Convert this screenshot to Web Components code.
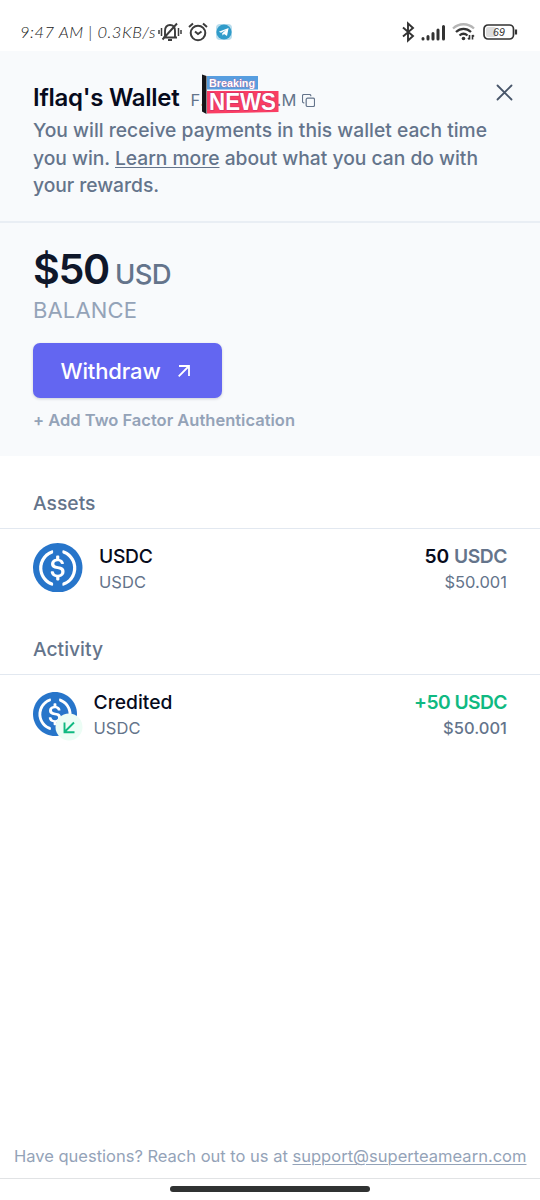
<!DOCTYPE html>
<html lang="en">
<head>
<meta charset="utf-8">
<title>Wallet</title>
<style>
html,body{margin:0;background:#fff}
body{font-family:Inter,"Liberation Sans",sans-serif;color:#64748b}
</style>
</head>
<body>
<wallet-app></wallet-app>
<script>
const define = (name, html, setup) => {
  const t = document.createElement('template');
  t.innerHTML = html;
  customElements.define(name, class extends HTMLElement {
    connectedCallback() {
      if (this.shadowRoot) return;
      this.attachShadow({mode: 'open'}).append(t.content.cloneNode(true));
      if (setup) setup(this);
    }
  });
};

/* A single line of text whose tracking is tuned so that it spans "w" pixels. */
define('text-run', `<style>:host{display:inline-block;white-space:pre}span{display:inline-block}:host([link]) span{text-decoration:underline;text-decoration-thickness:1.300px;text-underline-offset:2px}</style><span><slot></slot></span>`, el => {
  const w = +el.getAttribute('w');
  if (!w) return;
  const s = el.shadowRoot.querySelector('span');
  const n = el.textContent.length;
  s.style.letterSpacing = ((w - s.getBoundingClientRect().width) / n) + 'px';
});

define('status-bar', `<style>
:host{display:flex;height:51px;box-sizing:border-box;padding:13px 22px 0 20px;align-items:center;justify-content:space-between;color:#444}
.l,.r{display:flex;align-items:center}
.t{font:italic 300 16.500px/22px Lato,"Open Sans",sans-serif;color:#222}
svg{display:block;overflow:visible}
.cell{position:relative}
.cell text-run{position:absolute;left:10px;top:2px;font:italic 10.500px/12px "Liberation Sans",sans-serif;color:#333}
</style>
<div class="l"><text-run class="t" w="136">9:47 AM | 0.3KB/s</text-run>
<svg width="24" height="20" viewBox="0 0 24 20" style="margin-left:2px" fill="none" stroke="#3c3c3c" stroke-width="1.900"><path d="M5 15.500h14M7 15V9c0-4 2-6 5-6s5 2 5 6v6M10 18h4M4.500 17.500 19 1.500"/><path stroke-width="1.500" d="M1 8v4M3.500 6v8M20.500 6v8M23 8v4"/></svg>
<svg width="20" height="20" viewBox="0 0 20 20" style="margin-left:6px" fill="none" stroke="#3c3c3c" stroke-width="2"><circle cx="10" cy="11" r="7.300"/><path d="M7 9.500l3 2.500 3.500-2.500M1 5l4-3.500M19 5l-4-3.500"/></svg>
<svg width="16" height="16" viewBox="0 0 16 16" style="margin-left:8px"><rect width="16" height="16" rx="4" fill="#b9dded"/><circle cx="8" cy="8" r="7.600" fill="#309cca"/><path fill="#fff" d="M2.800 7.800 12.600 4 11 12 8 10 6.500 11.500 6.200 9.200 10 6 5 8.700z"/></svg></div>
<div class="r">
<svg width="13" height="20" viewBox="0 0 13 20" fill="none" stroke="#333" stroke-width="1.900"><path d="M1 5.500 11 14l-5 4.500V1.500L11 6 1 14.500"/></svg>
<svg width="25" height="17" viewBox="0 0 25 17" style="margin-left:6px" fill="none" stroke="#333" stroke-width="3" stroke-linecap="round"><path d="M2 14.500v.5M7 12.500V15M12 9.500V15M17 6V15M22.500 2.500V15"/></svg>
<svg width="24" height="18" viewBox="0 0 24 18" style="margin-left:6px" fill="none" stroke="#333" stroke-width="2.300"><path stroke="#b5b5b5" d="M1 5.500C7-.2 16-.2 22 5.500"/><path d="M4 9c4.500-4.200 10.500-4.200 15 0M7.500 12.500c2.500-2.200 5.500-2.200 8 0"/><circle cx="11.500" cy="15.500" r="1.800" fill="#333" stroke="none"/><path stroke-width="1.600" d="M17.500 12v4.500M20.500 12v4.500M16 15l1.500 1.500M20.500 12l1.500 1.500"/></svg>
<div class="cell" style="margin-left:7px"><svg width="35" height="16" viewBox="0 0 35 16" fill="none"><rect x="1" y="1" width="29.500" height="14" rx="4" fill="#fff" stroke="#333" stroke-width="1.700"/><rect x="3" y="3" width="10" height="10" rx="2" fill="#ddd"/><path d="M33 5.500v5" stroke="#333" stroke-width="2.200"/></svg><text-run w="12">69</text-run></div>
</div>`);

define('news-sticker', `<style>
:host{display:block;width:78px;height:42px}
svg{display:block;overflow:visible}
text{font-family:"Liberation Sans",sans-serif;font-weight:700;fill:#fff;paint-order:stroke}
</style>
<svg width="78" height="42" viewBox="0 0 78 42"><path fill="#151519" d="M1 .5 5.500 2V40L1 37.500z"/><path fill="#579ee0" d="M6 2h51v13.500H6z"/><path fill="#fa3e63" d="M6 17h71.500v21L6 39.500z"/>
<text x="8" y="12.500" font-size="11" textLength="46" lengthAdjust="spacingAndGlyphs" stroke="#d5527e" stroke-width=".5">Breaking</text>
<text x="8" y="35.500" font-size="23.500" textLength="67" lengthAdjust="spacingAndGlyphs" stroke="#c52b69" stroke-width="1">NEWS</text></svg>`);

define('wallet-header', `<style>
:host{display:block;position:relative;box-sizing:border-box;height:172px;padding:32px 27px 0 33px;border-bottom:2px solid #e9eef4;background:#f8fafc}
.h{display:flex;height:33px;line-height:30px;align-items:flex-start}
.n{font-size:24px;font-weight:600;color:#070b1c}
.a{font-size:16.500px;line-height:35px;margin-left:11px}
.z{margin-left:71px}
.c{margin:11px 0 0 5.500px}
.x{margin:1px 0 0 auto}
news-sticker{position:absolute;left:201px;top:23px}
p{margin:1px 0 0;font-size:19.250px;line-height:27.500px;font-weight:500;color:#64748b}
</style>
<div class="h"><text-run class="n" w="146.500">Iflaq's Wallet</text-run><text-run class="a" w="15">F.</text-run><text-run class="a z" w="20">.M</text-run>
<svg class="c" width="13" height="13" viewBox="0 0 14 14" fill="none" stroke="#64748b" stroke-width="1.300"><rect x="4.500" y="4.500" width="9" height="9" rx="1.500"/><path d="M2.500 9.500H2A1.500 1.500 0 0 1 .5 8V2A1.500 1.500 0 0 1 2 .5h6A1.500 1.500 0 0 1 9.500 2v.5"/></svg>
<svg class="x" width="17" height="17" viewBox="0 0 17 17" stroke="#475569" stroke-width="1.800" stroke-linecap="round"><path d="M1.500 1.500l14 14M15.500 1.500l-14 14"/></svg></div>
<p><text-run w="454">You will receive payments in this wallet each time</text-run><br><text-run w="82">you win. </text-run><text-run link w="104.500">Learn more</text-run><text-run w="258.500"> about what you can do with</text-run><br><text-run w="126">your rewards.</text-run></p>
<news-sticker></news-sticker>`);

define('balance-panel', `<style>
:host{display:block;box-sizing:border-box;height:233px;padding:21px 33px 0;background:#f8fafc}
.b{display:flex;align-items:baseline;line-height:50px;height:50px}
.m{font-size:41.250px;font-weight:600;color:#0f172a}
.u{font-size:27.500px;font-weight:500;margin-left:6px;color:#64748b}
.l{display:block;height:32px;line-height:33px;font-size:22px;color:#94a3b8;width:max-content}
.w{display:flex;box-sizing:border-box;width:189px;height:55px;margin:17px 0 0;padding:0 0 0 27.500px;align-items:center;border:0;border-radius:7px;background:#6366f1;color:#fff;font:500 22px Inter,sans-serif;box-shadow:0 1px 3px #0f172a2e}
.w svg{margin-left:17px}
.f{display:block;width:max-content;margin-top:11px;line-height:23px;font-size:16.500px;font-weight:600;color:#94a3b8}
</style>
<div class="b"><text-run class="m" w="76">$50</text-run><text-run class="u" w="56">USD</text-run></div>
<text-run class="l" w="104">BALANCE</text-run>
<button class="w"><text-run w="100">Withdraw</text-run><svg width="12" height="12" viewBox="0 0 12 12" fill="none" stroke="#fff" stroke-width="1.800"><path d="M.7 11.300 11 1M1 1h10v10"/></svg></button>
<text-run class="f" w="262">+ Add Two Factor Authentication</text-run>`);

define('usdc-icon', `<style>:host{display:block;width:49.500px;height:49.500px}svg{display:block;width:100%;height:100%}</style>
<svg viewBox="0 0 2000 2000"><path fill="#2775ca" d="M1000 2000c554.170 0 1000-445.830 1000-1000S1554.170 0 1000 0 0 445.830 0 1000s445.830 1000 1000 1000z"/><path fill="#fff" d="M1275 1158.330c0-145.830-87.500-195.830-262.500-216.660-125-16.670-150-50-150-108.340s41.670-95.830 125-95.830c75 0 116.670 25 137.500 87.500 4.170 12.500 16.670 20.830 29.170 20.830h66.660c16.670 0 29.170-12.500 29.170-29.160v-4.170c-16.670-91.670-91.670-162.500-187.500-170.830v-100c0-16.670-12.500-29.170-33.330-33.340h-62.500c-16.670 0-29.170 12.500-33.340 33.340v95.830c-125 16.670-204.160 100-204.160 204.170 0 137.500 83.330 191.660 258.330 212.500 116.670 20.830 154.170 45.830 154.170 112.500s-58.340 112.500-137.500 112.500c-108.340 0-145.840-45.840-158.340-108.340-4.160-16.660-16.660-25-29.160-25h-70.840c-16.660 0-29.160 12.500-29.160 29.170v4.170c16.660 104.160 83.330 179.160 220.830 200v100c0 16.660 12.500 29.160 33.330 33.330h62.500c16.670 0 29.170-12.500 33.340-33.330v-100c125-20.840 208.330-108.340 208.330-220.840z"/><path fill="#fff" d="M787.500 1595.830c-325-116.660-491.670-479.160-370.830-800 62.500-175 200-308.330 370.830-370.830 16.670-8.330 25-20.830 25-41.670V325c0-16.670-8.330-29.170-25-33.330-4.170 0-12.500 0-16.670 4.160-395.830 125-612.500 545.840-487.500 941.670 75 233.330 254.170 412.500 487.500 487.500 16.670 8.330 33.340 0 37.500-16.670 4.170-4.160 4.170-8.330 4.170-16.660v-58.340c0-12.500-12.500-29.160-25-37.500zM1229.170 295.830c-16.670-8.330-33.340 0-37.500 16.670-4.170 4.170-4.170 8.330-4.170 16.670v58.330c0 16.670 12.500 33.330 25 41.670 325 116.660 491.670 479.160 370.830 800-62.500 175-200 308.330-370.830 370.830-16.670 8.330-25 20.830-25 41.670V1700c0 16.670 8.330 29.170 25 33.330 4.170 0 12.500 0 16.670-4.160 395.830-125 612.500-545.840 487.500-941.670-75-237.500-258.340-416.670-487.500-491.670z"/></svg>`);

define('section-title', `<style>:host{display:block;box-sizing:border-box;height:40px;padding:0 33px;line-height:28px;font-size:19.250px;font-weight:500;color:#64748b;border-bottom:1.400px solid #e2e8f0}</style><slot></slot>`);

define('token-row', `<style>
:host{display:flex;align-items:flex-start;padding:0 33px;height:60px}
.t,.v{display:flex;flex-direction:column;margin-top:var(--ty,0px)}
.t{margin-left:var(--gap,16.500px)}
.v{margin-left:auto;align-items:flex-end}
::slotted([slot=name]),::slotted([slot=value]){font-size:19.250px;line-height:27px;font-weight:500;color:#070b1c}
::slotted([slot=value]){font-weight:600}
::slotted([slot=sub]),::slotted([slot=usd]){font-size:16.500px;line-height:24px;color:#64748b}
</style><slot name="icon"></slot><div class="t"><slot name="name"></slot><slot name="sub"></slot></div><div class="v"><slot name="value"></slot><slot name="usd"></slot></div>`);

define('credit-icon', `<style>:host{display:block;position:relative;width:44px;height:44px}
usdc-icon{width:44px;height:44px}
svg{position:absolute;left:21.500px;top:21px}</style><usdc-icon></usdc-icon>
<svg width="28" height="28" viewBox="0 0 28 28" fill="none"><circle cx="14" cy="14" r="13.500" fill="#ecfdf5"/><path d="M19 9.500 9.500 19M9.500 9.500v9.800H19.500" stroke="#10b981" stroke-width="1.900"/></svg>`);

define('wallet-footer', `<style>
:host{display:block;box-sizing:border-box;height:57px;margin-top:auto}
.q{height:35px;padding-left:14px;line-height:26px;font-size:16.500px;color:#94a3b8;border-bottom:1px solid #e1e3e5;white-space:nowrap}
.bar{width:200px;height:5.500px;border-radius:3px;background:#303232;margin:7px 0 0 169.500px}
</style><div class="q"><text-run w="278.500">Have questions? Reach out to us at </text-run><text-run link w="234">support@superteamearn.com</text-run></div><div class="bar"></div>`);

define('wallet-app', `<style>
:host{display:flex;flex-direction:column;width:540px;height:1200px;overflow:hidden;background:#fff}
.s1{margin-top:33px}.s2{margin-top:32.500px}
.r1{margin-top:13.500px;--ty:0px}
.r2{margin-top:16.500px;--ty:-2.500px;--gap:16.500px}
.g{color:#64748b}.e{color:#10b981}
</style>
<status-bar></status-bar>
<wallet-header></wallet-header>
<balance-panel></balance-panel>
<section-title class="s1"><text-run w="62.500">Assets</text-run></section-title>
<token-row class="r1"><usdc-icon slot="icon"></usdc-icon><text-run slot="name" w="53.500">USDC</text-run><text-run slot="sub" w="47">USDC</text-run><div slot="value"><text-run w="29.500">50 </text-run><text-run class="g" w="53">USDC</text-run></div><text-run slot="usd" w="62.500">$50.001</text-run></token-row>
<section-title class="s2"><text-run w="70">Activity</text-run></section-title>
<token-row class="r2"><credit-icon slot="icon"></credit-icon><text-run slot="name" w="79">Credited</text-run><text-run slot="sub" w="47">USDC</text-run><div slot="value"><text-run class="e" w="93">+50 USDC</text-run></div><text-run slot="usd" w="64" style="font-weight:500">$50.001</text-run></token-row>
<wallet-footer></wallet-footer>`);
</script>
</body>
</html>
